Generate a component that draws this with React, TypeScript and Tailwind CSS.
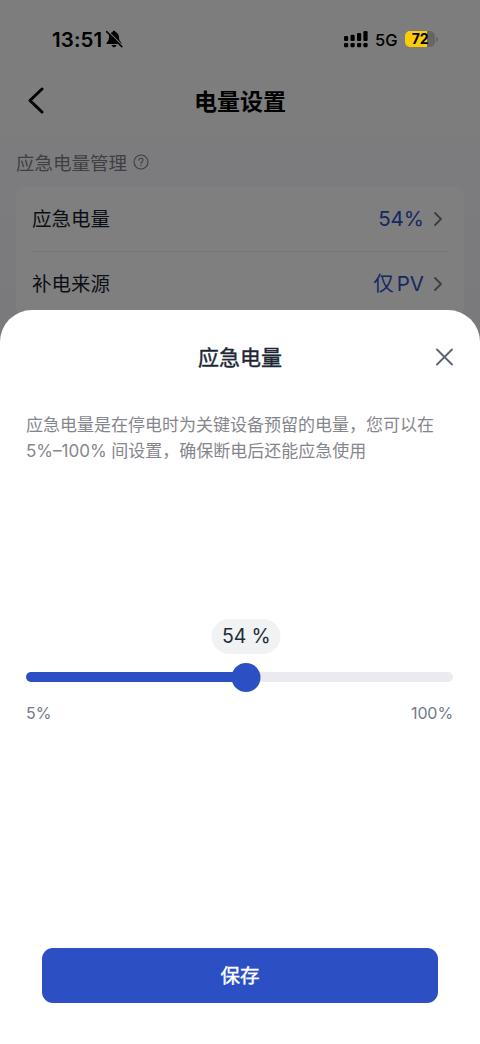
import React, { useState } from 'react';

interface SettingRowProps {
  label: string;
  value: React.ReactNode;
  onClick?: () => void;
}

const MIN = 5;
const MAX = 100;

const StatusBar = () => (
  <div className="h-[78px] flex items-center justify-between pl-[52px] pr-[75px] text-black">
    <div className="flex items-center gap-[4px]">
      <span className="pt-px text-[20.5px] leading-6 font-semibold tracking-[0.1px]">13:51</span>
      <svg width="17" height="18" viewBox="0 0 17 18">
        <path d="M8 .8c.8 0 1.3.5 1.5 1.1 2 .6 3.300 2.200 3.400 4.600.1 3 .6 4.200 2.300 6 .6.700.4 1.600-.6 1.600H1.400c-1 0-1.200-.9-.6-1.600C2.500 10.700 3 9.500 3.100 6.500c.1-2.400 1.400-4 3.400-4.600C6.700 1.300 7.200.8 8 .8zM5.600 15h4.800c-.2 1.300-1.200 2.200-2.400 2.200s-2.200-.9-2.400-2.200z" fill="currentColor" />
        <path d="M1.300.8L17 16.200" stroke="#f9f9fc" strokeWidth="1.300" />
        <path d="M.6 1.600L15.800 16.600" stroke="currentColor" strokeWidth="1.500" strokeLinecap="round" />
      </svg>
    </div>
    <div className="flex items-center">
      <svg width="24" height="17" viewBox="0 0 24 17" fill="currentColor">
        <rect x="0" y="5" width="4.200" height="5" rx="1.200" />
        <rect x="6.500" y="3.800" width="4.200" height="6.200" rx="1.200" />
        <rect x="13" y="2" width="4.200" height="8" rx="1.200" />
        <rect x="19.400" y="0" width="4.200" height="10" rx="1.200" />
        <rect x="0" y="12" width="4.200" height="4.200" rx="1.200" />
        <rect x="6.500" y="12" width="4.200" height="4.200" rx="1.200" />
        <rect x="13" y="12" width="4.200" height="4.200" rx="1.200" />
        <rect x="19.400" y="12" width="4.200" height="4.200" rx="1.200" />
      </svg>
      <span className="ml-[7px] w-[30px] pt-px text-[16.5px] leading-6 font-medium">5G</span>
    </div>
  </div>
);

const Battery = () => (
  <div className="absolute left-[405px] top-[31px] flex items-center gap-px">
    <div className="w-[30px] h-4 rounded-[5px] overflow-hidden bg-[linear-gradient(90deg,#fccc0a_73%,#656566_73%)] flex items-center justify-center">
      <span className="text-[14px] leading-4 font-bold text-black tracking-[-0.2px]">72</span>
    </div>
    <div className="w-[2px] h-[5px] rounded-r-full bg-[#656566]" />
  </div>
);

const Chevron = () => (
  <svg className="shrink-0" width="8" height="14" viewBox="0 0 8 14" fill="none" stroke="#7c7d83" strokeWidth="1.800" strokeLinecap="round" strokeLinejoin="round">
    <path d="M1 1l6 6-6 6" />
  </svg>
);

const SettingRow: React.FC<SettingRowProps> = ({ label, value, onClick }) => (
  <button onClick={onClick} className="w-full h-16 flex items-center text-left">
    <span className="flex-1 pt-[2px] text-[19.5px] text-[#17212f]">{label}</span>
    <span className="mr-[10px] text-[20.5px] text-[#2c4fc4]">{value}</span>
    <Chevron />
  </button>
);

export default function App() {
  const [open, setOpen] = useState(true);
  const [level, setLevel] = useState(54);
  const percent = ((level - MIN) / (MAX - MIN)) * 100;

  return (
    <div className="relative w-[480px] h-[1044px] overflow-hidden bg-[linear-gradient(180deg,#fafafd_0px,#fafafd_120px,#f5f5fa_310px)] font-['Inter','Noto_Sans_CJK_SC',sans-serif]">
      <StatusBar />

      {/* Header */}
      <header className="h-[46px] px-[27px] grid grid-cols-[1fr_auto_1fr] items-center">
        <button>
          <svg width="18" height="28" viewBox="0 0 18 28" fill="none" stroke="#000" strokeWidth="3" strokeLinecap="round" strokeLinejoin="round">
            <path d="M15 2L3 13.500l12 11.500" />
          </svg>
        </button>
        <h1 className="pt-[2px] text-[23px] leading-8 font-bold text-black">电量设置</h1>
      </header>

      {/* Settings */}
      <section className="px-4 pt-6">
        <div className="h-7 flex items-center gap-[6px] text-[#7e7f87]">
          <span className="pt-px text-[18.5px] leading-7">应急电量管理</span>
          <svg width="16" height="16" viewBox="0 0 16 16" fill="none" stroke="currentColor" strokeWidth="1.100" strokeLinecap="round">
            <circle cx="8" cy="8" r="7" />
            <path d="M5.900 6.300C5.900 5 6.800 4.200 8 4.200s2.100.8 2.100 1.900c0 1.600-2.100 1.700-2.100 3.300M8 11.400v.3" />
          </svg>
        </div>
        <div className="mt-[11px] pl-4 pr-[22px] bg-white rounded-lg">
          <SettingRow label="应急电量" value={`${level}%`} onClick={() => setOpen(true)} />
          <div className="h-px -mr-[6px] bg-[#eaeaee]" />
          <SettingRow label="补电来源" value={<>仅<span className="ml-[3px]">PV</span></>} />
        </div>
      </section>

      {open && (
        <>
          <div className="absolute inset-0 bg-black/50" onClick={() => setOpen(false)} />

          {/* Bottom sheet */}
          <div className="absolute inset-x-0 bottom-0 h-[734px] bg-white rounded-t-[32px] flex flex-col">
            <div className="mt-8 px-[26px] h-8 grid grid-cols-[1fr_auto_1fr] items-center">
              <h2 className="col-start-2 text-[21px] leading-8 font-normal [-webkit-text-stroke:0.4px] text-[#1d2733]">应急电量</h2>
              <button onClick={() => setOpen(false)} className="justify-self-end pb-[3px]">
                <svg width="19" height="18" viewBox="0 0 19 18" fill="none" stroke="#5c6472" strokeWidth="1.900" strokeLinecap="round">
                  <path d="M2 1.500l15 15M17 1.500l-15 15" />
                </svg>
              </button>
            </div>

            <p className="mt-[38px] px-[26px] text-[17px] leading-[26px] text-[#85868c] whitespace-nowrap">
              应急电量是在停电时为关键设备预留的电量，您可以在
              <br />
              5%–100% 间设置，确保断电后还能应急使用
            </p>

            {/* Slider */}
            <div className="mt-[155px] ml-[26px] mr-[27px]">
              <div className="flex" style={{ paddingLeft: `${percent}%` }}>
                <span className="-translate-x-1/2 w-[69px] h-[35px] rounded-full bg-[#f1f2f3] flex items-center justify-center text-[19.5px] text-[#222c38] tracking-[-0.2px] whitespace-nowrap">
                  {level} %
                </span>
              </div>
              <div className="relative mt-[8px] h-[30px] flex items-center">
                <div className="w-full h-[10px] rounded-full bg-[#ebeaf0] overflow-hidden">
                  <div className="h-full bg-[#2c4fc4]" style={{ width: `${percent}%` }} />
                </div>
                <div
                  className="absolute size-[29px] rounded-full bg-[#2c4fc4] -translate-x-1/2"
                  style={{ left: `${percent}%` }}
                />
                <input
                  type="range"
                  min={MIN}
                  max={MAX}
                  value={level}
                  onChange={(e) => setLevel(Number(e.target.value))}
                  className="absolute inset-0 w-full opacity-0 cursor-pointer"
                />
              </div>
              <div className="mt-[9px] flex justify-between text-[16px] leading-6 tracking-[-0.1px] text-[#737a88]">
                <span>{MIN}%</span>
                <span>{MAX}%</span>
              </div>
            </div>

            <button
              onClick={() => setOpen(false)}
              className="mt-auto mb-[41px] mx-[42px] h-[55px] pt-[3px] rounded-[11px] bg-[#2c4fc4] text-white text-[19.5px] [-webkit-text-stroke:0.4px]"
            >
              保存
            </button>
          </div>
        </>
      )}

      <Battery />
    </div>
  );
}
